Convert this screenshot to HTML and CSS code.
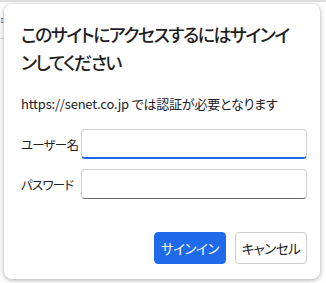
FILE: index.html
```html
<!DOCTYPE html>
<html lang="ja">
<head>
    <meta charset="UTF-8">
    <title>サインイン</title>
    <link rel="stylesheet" href="styles.css">
</head>
<body>
    <div class="page">
        <div class="page-bg">
            <span class="bg-glyph">ｪ</span>
            <div class="bg-line"></div>
        </div>
        <div class="dialog">
            <h1 class="dialog-title">このサイトにアクセスするにはサインインしてください</h1>
            <p class="dialog-desc">https://senet.co.jp では認証が必要となります</p>

            <div class="field">
                <label for="username">ユーザー名</label>
                <input type="text" id="username" class="focused">
            </div>
            <div class="field">
                <label for="password">パスワード</label>
                <input type="password" id="password">
            </div>

            <div class="actions">
                <button class="btn primary">サインイン</button>
                <button class="btn">キャンセル</button>
            </div>
        </div>
    </div>
</body>
</html>
```

FILE: styles.css
```css
/* Base Reset */
* {
    margin: 0;
    padding: 0;
    box-sizing: border-box;
}

body {
    font-family: "Noto Sans CJK JP", "Noto Sans", sans-serif;
    font-feature-settings: "palt";
    background: #fff;
    color: #202124;
    width: 326px;
    height: 283px;
    overflow: hidden;
    border-top: 2px solid #dcdcdc;
}

.page {
    position: relative;
    padding: 2px 6px 4px 4px;
}

/* Page behind the dialog */
.page-bg {
    position: absolute;
    left: 0;
    top: 0;
    width: 10px;
    height: 100%;
}

.bg-glyph {
    position: absolute;
    left: 0;
    top: 12px;
    font-size: 8px;
    line-height: 10px;
    color: #333;
}

.bg-line {
    position: absolute;
    left: 0;
    top: 36px;
    width: 10px;
    border-top: 1px solid #ddd;
}

/* Dialog */
.dialog {
    position: relative;
    background: #fff;
    border-radius: 8px;
    box-shadow: 0 1px 5px rgba(0,0,0,0.35);
    height: 275px;
    padding: 16px 13px 0 17px;
}

.dialog-title {
    max-width: 282px;
    font-size: 18px;
    font-weight: 500;
    letter-spacing: -1.5px;
    line-height: 28px;
    color: #1f1f1f;
    margin-bottom: 19px;
}

.dialog-desc {
    font-size: 13px;
    letter-spacing: -0.2px;
    line-height: 18px;
    color: #202124;
    margin-bottom: 16px;
}

/* Fields */
.field {
    display: flex;
    align-items: center;
    margin-bottom: 10px;
}

.field label {
    flex: none;
    width: 60px;
    white-space: nowrap;
    font-size: 12.5px;
    letter-spacing: -0.8px;
    color: #202124;
}

.field input {
    flex: 1;
    min-width: 0;
    height: 30px;
    border: 1px solid #d0d0d0;
    border-bottom: 1px solid #6b6b6b;
    border-radius: 4px;
    font-size: 13px;
    outline: none;
}

.field input.focused {
    border-bottom: 2px solid #1a6ae8;
}

/* Buttons */
.actions {
    display: flex;
    justify-content: flex-end;
    gap: 9px;
    margin-top: 33px;
}

.btn {
    width: 72px;
    height: 32px;
    border: 1px solid #d0d0d0;
    border-radius: 4px;
    background: #fff;
    color: #202124;
    font-family: inherit;
    font-feature-settings: "palt";
    font-size: 13.5px;
    letter-spacing: -0.5px;
}

.btn.primary {
    background: #1f6ae8;
    border-color: #1f6ae8;
    color: #fff;
}
```
